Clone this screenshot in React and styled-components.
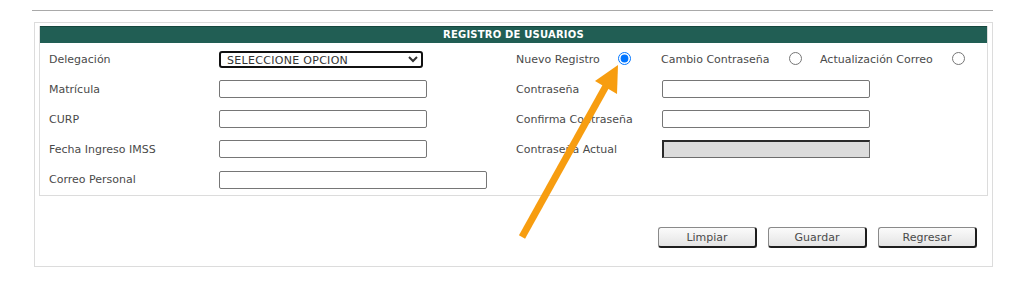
import React from 'react';
import styled, { createGlobalStyle } from 'styled-components';

const GlobalStyle = createGlobalStyle`
  html, body {
    margin: 0;
    padding: 0;
    background: #ffffff;
  }
  body {
    font-family: Verdana, "DejaVu Sans", sans-serif;
    font-size: 11px;
    color: #4a4a4a;
  }
`;

const Page = styled.div`
  position: relative;
  width: 1022px;
  height: 291px;
  padding-top: 10px;
  box-sizing: border-box;
`;

const TopRule = styled.div`
  margin-left: 32px;
  width: 961px;
  border-top: 1px solid #a9a9a9;
`;

const OuterBox = styled.div`
  margin: 11px 0 0 34px;
  width: 959px;
  height: 245px;
  box-sizing: border-box;
  border: 1px solid #dcdcdc;
  padding: 3px 4px 0 4px;
`;

const FormBox = styled.div`
  border: 1px solid #dcdcdc;
  border-top: none;
`;

const Header = styled.div`
  height: 16px;
  line-height: 16px;
  background: #215e54;
  border-top: 1px solid #15463d;
  color: #ffffff;
  font-weight: bold;
  font-size: 10px;
  text-align: center;
  letter-spacing: 0.2px;
`;

const Grid = styled.div`
  display: grid;
  grid-template-columns: 170px 297px 146px 1fr;
  grid-template-rows: 30px 30px 30px 30px 31px;
  padding: 1px 0 0 9px;
  align-items: center;
`;

const Label = styled.span`
  color: #4a4a4a;
  white-space: nowrap;
`;

const TextInput = styled.input`
  box-sizing: border-box;
  width: ${p => p.$w || 208}px;
  height: 18px;
  margin: 0;
  padding: 0 3px;
  border: 1px solid #767676;
  border-radius: 2px;
  background: ${p => (p.disabled ? '#dcdcdc' : '#ffffff')};
  font-family: inherit;
  font-size: 11px;

  &:disabled {
    border: 1px solid #6d6d6d;
    border-top: 2px solid #2a2a2a;
    border-left: 2px solid #2a2a2a;
    border-radius: 0;
  }
`;

const Select = styled.select`
  box-sizing: border-box;
  width: 204px;
  height: 17px;
  margin: 0;
  padding: 0 0 0 2px;
  border: 2px solid #111111;
  border-radius: 3px;
  background: #ffffff;
  color: #333333;
  font-family: inherit;
  font-size: 11px;
  letter-spacing: 0.3px;
`;

const OptionGroup = styled.div`
  grid-column: 3 / span 2;
  display: flex;
  align-items: center;
`;

const Option = styled.label`
  display: flex;
  align-items: center;
  width: ${p => p.$w}px;
`;

const OptionText = styled.span`
  width: ${p => p.$w}px;
  white-space: nowrap;
`;

const Radio = styled.input.attrs({ type: 'radio', name: 'tipo' })`
  width: 13px;
  height: 13px;
  margin: 0 0 2px 0;
`;

const ButtonBar = styled.div`
  display: flex;
  justify-content: flex-end;
  gap: 11px;
  padding: 31px 11px 0 0;
`;

const Button = styled.button`
  box-sizing: border-box;
  width: ${p => p.$w || 99}px;
  height: 21px;
  padding: 0;
  border: 1px solid #8a8a8a;
  border-right: 2px solid #1e1e1e;
  border-bottom: 2px solid #1e1e1e;
  border-radius: 3px;
  background: linear-gradient(#fbfbfb, #e4e4e4);
  color: #4a4a4a;
  font-family: inherit;
  font-size: 11px;
`;

const Overlay = styled.svg`
  position: absolute;
  left: 0;
  top: 0;
  pointer-events: none;
`;

export default function App() {
  return (
    <Page>
      <GlobalStyle />
      <TopRule />
      <OuterBox>
        <FormBox>
          <Header>REGISTRO DE USUARIOS</Header>
          <Grid>
            <Label>Delegación</Label>
            <div>
              <Select defaultValue="0">
                <option value="0">SELECCIONE OPCION</option>
              </Select>
            </div>
            <OptionGroup>
              <Option $w={145}>
                <OptionText $w={102}>Nuevo Registro</OptionText>
                <Radio defaultChecked />
              </Option>
              <Option $w={159}>
                <OptionText $w={128}>Cambio Contraseña</OptionText>
                <Radio />
              </Option>
              <Option $w={150}>
                <OptionText $w={132}>Actualización Correo</OptionText>
                <Radio />
              </Option>
            </OptionGroup>

            <Label>Matrícula</Label>
            <div><TextInput /></div>
            <Label>Contraseña</Label>
            <div><TextInput type="password" /></div>

            <Label>CURP</Label>
            <div><TextInput /></div>
            <Label>Confirma Contraseña</Label>
            <div><TextInput type="password" /></div>

            <Label>Fecha Ingreso IMSS</Label>
            <div><TextInput /></div>
            <Label>Contraseña Actual</Label>
            <div><TextInput type="password" disabled /></div>

            <Label>Correo Personal</Label>
            <div><TextInput $w={268} /></div>
          </Grid>
        </FormBox>
        <ButtonBar>
          <Button>Limpiar</Button>
          <Button>Guardar</Button>
          <Button>Regresar</Button>
        </ButtonBar>
      </OuterBox>

      <Overlay width="1022" height="291" viewBox="0 0 1022 291">
        <line x1="522" y1="237" x2="606" y2="86" stroke="#f79d10" strokeWidth="7" />
        <polygon points="618,65 595,81 617,94" fill="#f79d10" />
      </Overlay>
    </Page>
  );
}
